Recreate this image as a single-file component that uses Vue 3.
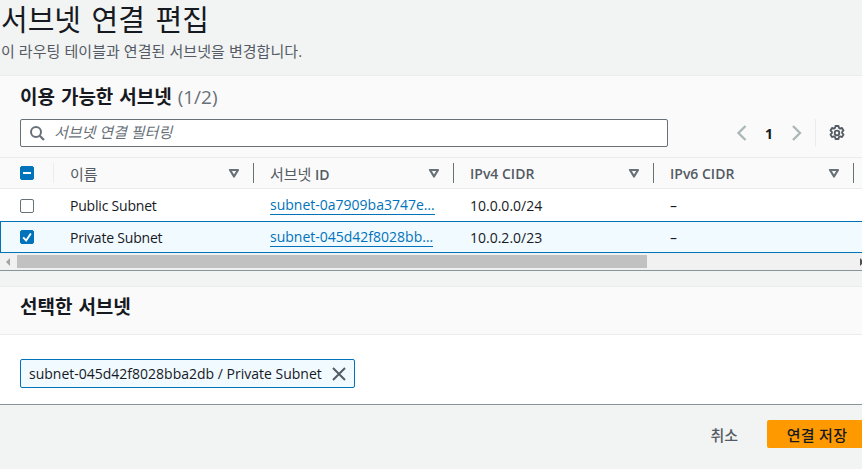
<script setup>
const columns = [
  { ko: '이름', en: '' },
  { ko: '서브넷', en: ' ID' },
  { ko: '', en: 'IPv4 CIDR' },
  { ko: '', en: 'IPv6 CIDR' }
]
const rows = [
  { name: 'Public Subnet', id: 'subnet-0a7909ba3747e…', v4: '10.0.0.0/24', v6: '–', selected: false },
  { name: 'Private Subnet', id: 'subnet-045d42f8028bb…', v4: '10.0.2.0/23', v6: '–', selected: true }
]
</script>

<template>
  <div class="page">
    <header class="page-head">
      <h1>서브넷 연결 편집</h1>
      <p>이 라우팅 테이블과 연결된 서브넷을 변경합니다.</p>
    </header>

    <section class="card table-card">
      <div class="card-head">
        <h2>이용 가능한 서브넷 <span class="count">(1/2)</span></h2>
        <div class="tools">
          <label class="filter">
            <svg class="search" viewBox="0 0 16 16" width="16" height="16">
              <circle cx="7" cy="7" r="5" fill="none" stroke="#687078" stroke-width="2" />
              <path d="M10.7 10.7 15 15" stroke="#687078" stroke-width="2.2" fill="none" />
            </svg>
            <span class="placeholder">서브넷 연결 필터링</span>
          </label>
          <div class="pager">
            <svg viewBox="0 0 12 16" width="12" height="16"><path d="M10.500 1 3.500 8l7 7" fill="none" stroke="#aab7b8" stroke-width="2.300" /></svg>
            <span class="page-num">1</span>
            <svg viewBox="0 0 12 16" width="12" height="16"><path d="M2 1 9 8l-7 7" fill="none" stroke="#aab7b8" stroke-width="2.300" /></svg>
          </div>
          <div class="settings">
            <svg viewBox="0 0 16 16" width="16" height="16">
              <path d="M6.500 1h3l.4 1.900 1.300.7 1.800-.7 1.500 2.600-1.400 1.300v1.400l1.400 1.300-1.500 2.600-1.800-.7-1.300.7-.4 1.900h-3l-.4-1.900-1.300-.7-1.800.7-1.500-2.600 1.400-1.300V6.800L1.500 5.500 3 2.900l1.800.7 1.300-.7z" fill="none" stroke="#545b64" stroke-width="1.800" stroke-linejoin="round" />
              <circle cx="8" cy="8" r="2.300" fill="none" stroke="#545b64" stroke-width="1.800" />
            </svg>
          </div>
        </div>
      </div>

      <div class="table">
        <div class="row head-row">
          <div class="check-cell">
            <span class="box on"><span class="dash"></span></span>
            <i class="sep light"></i>
          </div>
          <div v-for="c in columns" :key="c.ko + c.en" class="cell head-cell">
            <span class="label"><span v-if="c.ko" class="ko">{{ c.ko }}</span>{{ c.en }}</span>
            <svg class="caret" viewBox="0 0 12 10" width="12" height="10"><path d="M2 2h8L6 8.500z" fill="none" stroke="#687078" stroke-width="2.200" stroke-linejoin="round" /></svg>
            <i class="sep"></i>
          </div>
        </div>
        <div v-for="r in rows" :key="r.name" class="row body-row" :class="{ selected: r.selected }">
          <div class="check-cell">
            <span class="box" :class="{ on: r.selected }">
              <svg v-if="r.selected" viewBox="0 0 14 14" width="14" height="14"><path d="M2.500 7.500 6 11l5.500-8" fill="none" stroke="#fff" stroke-width="2.200" /></svg>
            </span>
          </div>
          <div class="cell name">{{ r.name }}</div>
          <div class="cell"><a class="link">{{ r.id }}</a></div>
          <div class="cell">{{ r.v4 }}</div>
          <div class="cell">{{ r.v6 }}</div>
        </div>
      </div>

      <div class="scrollbar">
        <span class="arrow left"></span>
        <span class="thumb"></span>
        <span class="arrow right"></span>
      </div>
    </section>

    <section class="card selected-card">
      <h2 class="selected-title">선택한 서브넷</h2>
      <div class="selected-body">
        <div class="token">
          <span>subnet-045d42f8028bba2db / Private Subnet</span>
          <svg viewBox="0 0 16 16" width="16" height="16"><path d="M2 2l12 12M14 2 2 14" stroke="#545b64" stroke-width="2" fill="none" /></svg>
        </div>
      </div>
    </section>

    <footer class="actions">
      <span class="cancel">취소</span>
      <button class="save">연결 저장</button>
    </footer>
  </div>
</template>

<style>
html, body { margin: 0; background: #f2f3f3; overflow: hidden; }
</style>

<style scoped>
.page {
  width: 862px;
  height: 469px;
  overflow: hidden;
  background: #f2f3f3;
  color: #16191f;
  font-family: "Open Sans", "Noto Sans CJK KR", sans-serif;
  font-size: 14px;
}
.page-head { height: 75px; padding-left: 1px; box-sizing: border-box; }
h1 {
  margin: 0;
  height: 41px;
  font-size: 29px;
  line-height: 40px;
  font-weight: 400;
  word-spacing: 3px;
}
p { margin: 0; font-size: 15px; line-height: 21px; letter-spacing: 0.07px; color: #545b64; }
.card { width: 900px; background: #fff; }
.table-card { border-top: 1px solid #eaeded; border-bottom: 1px solid #879596; }
.card-head { background: #fafafa; height: 81px; padding: 9px 0 0 20px; box-sizing: border-box; }
h2 { margin: 0; font-size: 19px; line-height: 24px; font-weight: 700; word-spacing: 1px; color: #16191f; }
.count { font-weight: 400; color: #687078; }
.tools { display: flex; align-items: center; margin-top: 10px; }
.filter {
  width: 648px;
  height: 28px;
  box-sizing: border-box;
  border: 1px solid #687078;
  border-radius: 2px;
  background: #fff;
  display: flex;
  align-items: center;
}
.search { margin-left: 8px; margin-right: 9px; }
.placeholder { font-style: italic; color: #687078; font-size: 15px; line-height: 24px; padding-bottom: 2px; }
.pager { display: flex; align-items: center; margin-left: 67px; }
.page-num { width: 44px; text-align: center; font-weight: 700; font-size: 14px; }
.settings {
  height: 28px;
  border-left: 1px solid #eaeded;
  margin-left: 12px;
  padding-left: 13px;
  display: flex;
  align-items: center;
}
.row { display: grid; grid-template-columns: 54px 200px 200px 200px 200px; box-sizing: border-box; }
.head-row {
  height: 32px;
  background: #fafafa;
  border-top: 1px solid #eaeded;
  border-bottom: 1px solid #eaeded;
}
.body-row { height: 32px; background: #fff; border-top: 1px solid #fff; }
.body-row.selected {
  background: #f1faff;
  border-top: 1px solid #0073bb;
  border-bottom: 1px solid #0073bb;
  border-left: 1px solid #0073bb;
  grid-template-columns: 53px 200px 200px 200px 200px;
}
.check-cell { position: relative; display: flex; align-items: center; padding-left: 20px; }
.selected .check-cell { padding-left: 19px; }
.box {
  width: 14px;
  height: 14px;
  box-sizing: border-box;
  border: 1px solid #687078;
  border-radius: 2px;
  background: #fff;
  display: flex;
  align-items: center;
  justify-content: center;
}
.box.on { background: #0073bb; border-color: #0073bb; }
.dash { width: 8px; height: 2px; background: #fff; }
.cell {
  position: relative;
  padding-left: 16px;
  display: flex;
  align-items: center;
  white-space: nowrap;
  font-size: 14px;
  color: #16191f;
}
.cell.name { letter-spacing: -0.2px; }
.head-cell { color: #545b64; font-weight: 600; }
.label { white-space: pre; }
.ko { font-weight: 400; font-size: 15px; }
.caret { position: absolute; right: 14px; top: 10px; }
.sep { position: absolute; right: 0; top: 5px; height: 20px; width: 1px; background: #687078; }
.check-cell .sep { background: #eaeded; }
.link { color: #0073bb; border-bottom: 1px solid #0073bb; line-height: 18px; }
.scrollbar {
  height: 17px;
  background: #f1f1f1;
  position: relative;
  width: 869px;
}
.thumb { position: absolute; left: 17px; top: 2px; width: 630px; height: 13px; background: #c1c1c1; }
.arrow { position: absolute; top: 5px; width: 0; height: 0; border-top: 4px solid transparent; border-bottom: 4px solid transparent; }
.arrow.left { left: 6px; border-right: 4px solid #a3a3a3; }
.arrow.right { right: 5px; border-left: 4px solid #505050; }
.selected-card { margin-top: 15px; border-top: 1px solid #eaeded; border-bottom: 1px solid #879596; }
.selected-title {
  background: #fafafa;
  height: 48px;
  box-sizing: border-box;
  line-height: 40px;
  padding-left: 20px;
  border-bottom: 1px solid #eaeded;
}
.selected-body { height: 69px; padding: 24px 0 0 20px; box-sizing: border-box; }
.token {
  display: inline-flex;
  align-items: center;
  height: 29px;
  box-sizing: border-box;
  width: 335px;
  border: 1px solid #0073bb;
  border-radius: 2px;
  background: #f1faff;
  padding-left: 8px;
  font-size: 14px;
  white-space: nowrap;
}
.token svg { margin-left: 9px; }
.actions { display: flex; justify-content: flex-end; align-items: center; padding-top: 15px; }
.cancel { color: #545b64; font-weight: 500; font-size: 15px; margin-right: 29px; }
.save {
  width: 100px;
  height: 28px;
  margin-right: -5px;
  border: 0;
  border-radius: 2px;
  background: #ff9900;
  color: #16191f;
  font-family: inherit;
  font-size: 15px;
  letter-spacing: 0.3px;
  font-weight: 500;
  padding: 0;
}
</style>
